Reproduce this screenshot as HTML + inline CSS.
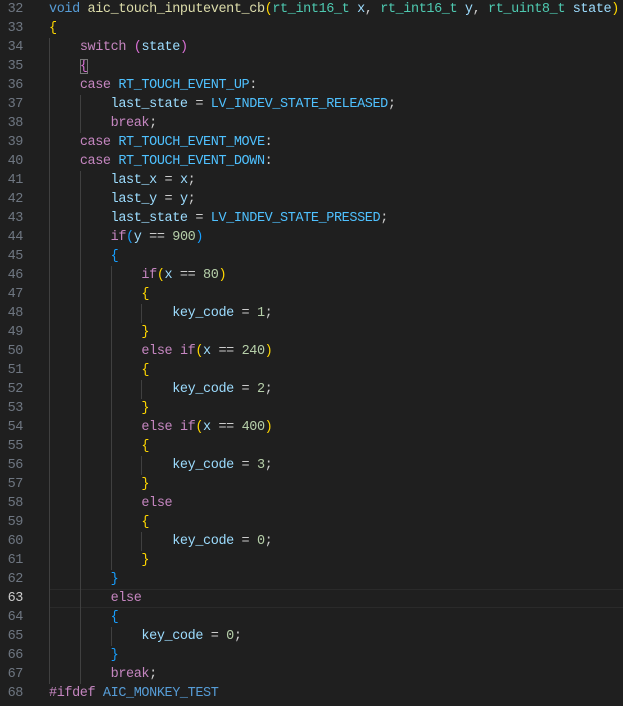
<!DOCTYPE html>
<html><head><style>
body{margin:0;background:#1f1f1f;width:623px;height:706px;overflow:hidden;position:relative}
.ln{position:absolute;left:0;width:23px;text-align:right;color:#6e7681}
.l,.ln{font-family:"Liberation Mono",monospace;font-size:13.5px;letter-spacing:-0.4px;line-height:19px;height:19px;white-space:pre}
.l{position:absolute;left:49px;color:#cccccc;top:1px}
.g{position:absolute;width:1px;background:#404040}
.k{color:#569cd6}.f{color:#dcdcaa}.t{color:#4ec9b0}.p{color:#9cdcfe}.c{color:#c586c0}.m{color:#4fc1ff}.n{color:#b5cea8}
.b1{color:#ffd700}.b2{color:#da70d6}.b3{color:#179fff}
.cur{position:absolute;left:49px;right:0;top:589px;height:17px;border-top:1px solid #2a2a2a;border-bottom:1px solid #2a2a2a}
</style></head><body>
<div class="cur"></div>
<div class="g" style="left:49px;top:38px;height:646px"></div>
<div class="g" style="left:80px;top:95px;height:38px"></div>
<div class="g" style="left:80px;top:171px;height:513px"></div>
<div class="g" style="left:111px;top:266px;height:304px"></div>
<div class="g" style="left:111px;top:627px;height:19px"></div>
<div class="g" style="left:141px;top:304px;height:19px"></div>
<div class="g" style="left:141px;top:380px;height:19px"></div>
<div class="g" style="left:141px;top:456px;height:19px"></div>
<div class="g" style="left:141px;top:532px;height:19px"></div>
<div class="ln" style="top:0">32</div><div class="l" style="top:0"><span class="k">void</span> <span class="f">aic_touch_inputevent_cb</span><span class="b1">(</span><span class="t">rt_int16_t</span> <span class="p">x</span>, <span class="t">rt_int16_t</span> <span class="p">y</span>, <span class="t">rt_uint8_t</span> <span class="p">state</span><span class="b1">)</span></div>
<div class="ln" style="top:19px">33</div><div class="l" style="top:19px"><span class="b1">{</span></div>
<div class="ln" style="top:38px">34</div><div class="l" style="top:38px">    <span class="c">switch</span> <span class="b2">(</span><span class="p">state</span><span class="b2">)</span></div>
<div class="ln" style="top:57px">35</div><div class="l" style="top:57px">    <span class="b2" style="outline:1px solid #777;outline-offset:-1px">{</span></div>
<div class="ln" style="top:76px">36</div><div class="l" style="top:76px">    <span class="c">case</span> <span class="m">RT_TOUCH_EVENT_UP</span>:</div>
<div class="ln" style="top:95px">37</div><div class="l" style="top:95px">        <span class="p">last_state</span> = <span class="m">LV_INDEV_STATE_RELEASED</span>;</div>
<div class="ln" style="top:114px">38</div><div class="l" style="top:114px">        <span class="c">break</span>;</div>
<div class="ln" style="top:133px">39</div><div class="l" style="top:133px">    <span class="c">case</span> <span class="m">RT_TOUCH_EVENT_MOVE</span>:</div>
<div class="ln" style="top:152px">40</div><div class="l" style="top:152px">    <span class="c">case</span> <span class="m">RT_TOUCH_EVENT_DOWN</span>:</div>
<div class="ln" style="top:171px">41</div><div class="l" style="top:171px">        <span class="p">last_x</span> = <span class="p">x</span>;</div>
<div class="ln" style="top:190px">42</div><div class="l" style="top:190px">        <span class="p">last_y</span> = <span class="p">y</span>;</div>
<div class="ln" style="top:209px">43</div><div class="l" style="top:209px">        <span class="p">last_state</span> = <span class="m">LV_INDEV_STATE_PRESSED</span>;</div>
<div class="ln" style="top:228px">44</div><div class="l" style="top:228px">        <span class="c">if</span><span class="b3">(</span><span class="p">y</span> == <span class="n">900</span><span class="b3">)</span></div>
<div class="ln" style="top:247px">45</div><div class="l" style="top:247px">        <span class="b3">{</span></div>
<div class="ln" style="top:266px">46</div><div class="l" style="top:266px">            <span class="c">if</span><span class="b1">(</span><span class="p">x</span> == <span class="n">80</span><span class="b1">)</span></div>
<div class="ln" style="top:285px">47</div><div class="l" style="top:285px">            <span class="b1">{</span></div>
<div class="ln" style="top:304px">48</div><div class="l" style="top:304px">                <span class="p">key_code</span> = <span class="n">1</span>;</div>
<div class="ln" style="top:323px">49</div><div class="l" style="top:323px">            <span class="b1">}</span></div>
<div class="ln" style="top:342px">50</div><div class="l" style="top:342px">            <span class="c">else</span> <span class="c">if</span><span class="b1">(</span><span class="p">x</span> == <span class="n">240</span><span class="b1">)</span></div>
<div class="ln" style="top:361px">51</div><div class="l" style="top:361px">            <span class="b1">{</span></div>
<div class="ln" style="top:380px">52</div><div class="l" style="top:380px">                <span class="p">key_code</span> = <span class="n">2</span>;</div>
<div class="ln" style="top:399px">53</div><div class="l" style="top:399px">            <span class="b1">}</span></div>
<div class="ln" style="top:418px">54</div><div class="l" style="top:418px">            <span class="c">else</span> <span class="c">if</span><span class="b1">(</span><span class="p">x</span> == <span class="n">400</span><span class="b1">)</span></div>
<div class="ln" style="top:437px">55</div><div class="l" style="top:437px">            <span class="b1">{</span></div>
<div class="ln" style="top:456px">56</div><div class="l" style="top:456px">                <span class="p">key_code</span> = <span class="n">3</span>;</div>
<div class="ln" style="top:475px">57</div><div class="l" style="top:475px">            <span class="b1">}</span></div>
<div class="ln" style="top:494px">58</div><div class="l" style="top:494px">            <span class="c">else</span></div>
<div class="ln" style="top:513px">59</div><div class="l" style="top:513px">            <span class="b1">{</span></div>
<div class="ln" style="top:532px">60</div><div class="l" style="top:532px">                <span class="p">key_code</span> = <span class="n">0</span>;</div>
<div class="ln" style="top:551px">61</div><div class="l" style="top:551px">            <span class="b1">}</span></div>
<div class="ln" style="top:570px">62</div><div class="l" style="top:570px">        <span class="b3">}</span></div>
<div class="ln" style="top:589px;color:#cccccc">63</div><div class="l" style="top:589px">        <span class="c">else</span></div>
<div class="ln" style="top:608px">64</div><div class="l" style="top:608px">        <span class="b3">{</span></div>
<div class="ln" style="top:627px">65</div><div class="l" style="top:627px">            <span class="p">key_code</span> = <span class="n">0</span>;</div>
<div class="ln" style="top:646px">66</div><div class="l" style="top:646px">        <span class="b3">}</span></div>
<div class="ln" style="top:665px">67</div><div class="l" style="top:665px">        <span class="c">break</span>;</div>
<div class="ln" style="top:684px">68</div><div class="l" style="top:684px"><span class="c">#ifdef</span> <span class="k">AIC_MONKEY_TEST</span></div>
</body></html>
